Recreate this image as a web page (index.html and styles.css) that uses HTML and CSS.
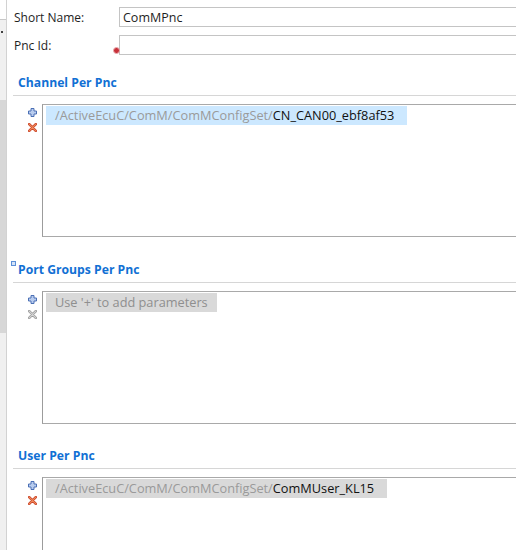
FILE: index.html
```html
<!DOCTYPE html>
<html lang="en">
<head>
<meta charset="utf-8">
<title>ComMPnc</title>
<link rel="stylesheet" href="styles.css">
</head>
<body>
<div class="app">
  <aside class="gutter">
    <div class="gutter-top"></div>
    <div class="gutter-dot"></div>
    <div class="gutter-thumb"></div>
  </aside>

  <main class="form">
    <div class="field-row">
      <label class="field-label">Short Name:</label>
      <div class="field-input">ComMPnc</div>
    </div>
    <div class="field-row field-row-next">
      <label class="field-label">Pnc Id:</label>
      <div class="field-input"><span class="error-mark"></span></div>
    </div>

    <section class="group group-first">
      <h2 class="group-title">Channel Per Pnc</h2>
      <div class="group-body">
        <div class="tools">
          <svg class="tool" viewBox="0 0 9 9"><path d="M3 0.5h3v2.5h2.5v3h-2.5v2.5h-3v-2.5h-2.5v-3h2.5z" fill="#b8ccee" stroke="#4a6fb5" stroke-width="1"/></svg>
          <svg class="tool" viewBox="0 0 9 9"><path d="M1.2 1.2l6.6 6.6M7.8 1.2l-6.6 6.6" stroke="#c9432a" stroke-width="2.6" stroke-linecap="round"/><path d="M1.2 1.2l6.6 6.6M7.8 1.2l-6.6 6.6" stroke="#f08a5a" stroke-width="1.1" stroke-linecap="round"/></svg>
        </div>
        <div class="list">
          <div class="item item-selected"><span class="path">/ActiveEcuC/ComM/ComMConfigSet/</span>CN_CAN00_ebf8af53</div>
        </div>
      </div>
    </section>

    <section class="group group-second">
      <h2 class="group-title"><span class="group-mark"></span>Port Groups Per Pnc</h2>
      <div class="group-body">
        <div class="tools">
          <svg class="tool" viewBox="0 0 9 9"><path d="M3 0.5h3v2.5h2.5v3h-2.5v2.5h-3v-2.5h-2.5v-3h2.5z" fill="#b8ccee" stroke="#4a6fb5" stroke-width="1"/></svg>
          <svg class="tool" viewBox="0 0 9 9"><path d="M1.2 1.2l6.6 6.6M7.8 1.2l-6.6 6.6" stroke="#9a9a9a" stroke-width="2.6" stroke-linecap="round"/><path d="M1.2 1.2l6.6 6.6M7.8 1.2l-6.6 6.6" stroke="#d4d4d4" stroke-width="1.1" stroke-linecap="round"/></svg>
        </div>
        <div class="list">
          <div class="item item-inactive item-hint">Use '+' to add parameters</div>
        </div>
      </div>
    </section>

    <section class="group group-last">
      <h2 class="group-title">User Per Pnc</h2>
      <div class="group-body">
        <div class="tools">
          <svg class="tool" viewBox="0 0 9 9"><path d="M3 0.5h3v2.5h2.5v3h-2.5v2.5h-3v-2.5h-2.5v-3h2.5z" fill="#b8ccee" stroke="#4a6fb5" stroke-width="1"/></svg>
          <svg class="tool" viewBox="0 0 9 9"><path d="M1.2 1.2l6.6 6.6M7.8 1.2l-6.6 6.6" stroke="#c9432a" stroke-width="2.6" stroke-linecap="round"/><path d="M1.2 1.2l6.6 6.6M7.8 1.2l-6.6 6.6" stroke="#f08a5a" stroke-width="1.1" stroke-linecap="round"/></svg>
        </div>
        <div class="list">
          <div class="item item-inactive"><span class="path">/ActiveEcuC/ComM/ComMConfigSet/</span>ComMUser_KL15</div>
        </div>
      </div>
    </section>
  </main>
</div>
</body>
</html>
```
FILE: styles.css
```css
* { box-sizing: border-box; }

html, body {
  margin: 0;
  padding: 0;
  width: 516px;
  height: 550px;
  overflow: hidden;
  background: #ffffff;
}

body {
  font-family: "Open Sans", "Noto Sans", sans-serif;
  font-size: 12px;
  color: #1e1e1e;
}

.app {
  display: flex;
  height: 550px;
}

/* left edge of the neighbouring view with its scrollbar */
.gutter {
  position: relative;
  flex: 0 0 7px;
  background: #f0f0f0;
  border-right: 1px solid #d2d2d2;
}

.gutter-top {
  height: 20px;
  background: #ffffff;
  border-bottom: 1px solid #c8c8c8;
}

.gutter-dot {
  position: absolute;
  left: 1px;
  top: 31px;
  width: 2px;
  height: 2px;
  background: #404040;
}

.gutter-thumb {
  position: absolute;
  left: 0;
  top: 100px;
  width: 6px;
  height: 233px;
  background: #d7d7d7;
}

.form {
  flex: 1;
  min-width: 0;
  padding: 7px 0 0 6px;
}

.field-row {
  display: flex;
  align-items: center;
  height: 20px;
}

.field-row-next { margin-top: 8px; }

.field-label {
  flex: 0 0 106px;
  padding-left: 1px;
  color: #1e1e1e;
}

.field-input {
  position: relative;
  flex: 1;
  height: 20px;
  margin-right: -10px;
  padding: 1px 0 0 3px;
  border: 1px solid #c4c4c4;
  border-right: none;
  line-height: 17px;
  font-size: 12.5px;
}

/* validation marker beside the empty id field */
.error-mark {
  position: absolute;
  left: -7px;
  top: 11px;
  width: 7px;
  height: 7px;
  border-radius: 50%;
  background: #c8323a;
  border: 1px solid #eab0b4;
}

.group-first { margin-top: 19px; }
.group-second { margin-top: 24px; }
.group-last { margin-top: 23px; }

.group-title {
  position: relative;
  margin: 0 0 8px 0;
  height: 22px;
  padding: 0 0 4px 5px;
  line-height: 18px;
  font-size: 12.2px;
  font-weight: 700;
  color: #1170d4;
  border-bottom: 1px solid #d6d6d6;
}

.group-mark {
  position: absolute;
  left: -2px;
  top: 0;
  width: 5px;
  height: 5px;
  border: 1px solid #5d8fd8;
  background: #d6e4f8;
}

.group-body {
  display: flex;
  margin-left: 5px;
}

.tools {
  flex: 0 0 24px;
  display: flex;
  flex-direction: column;
  align-items: center;
  gap: 6px;
  padding: 4px 0 0 4px;
}

.tool {
  width: 9px;
  height: 9px;
  display: block;
}

.list {
  flex: 1;
  height: 133px;
  margin-right: -10px;
  padding: 1px 0 0 3px;
  border: 1px solid #a9a9a9;
  border-right: none;
  border-left-color: #9c9c9c;
}

.group-last .list { height: 80px; }

.item {
  display: inline-block;
  height: 19px;
  line-height: 19px;
  padding: 0 13px 0 9px;
  font-size: 12.75px;
  color: #111111;
}

.item-selected { background: #cce8ff; }
.item-inactive { background: #d9d9d9; }

.path { color: #9a9a9a; }
.item-hint { color: #8f8f8f; padding-right: 9px; }
```
